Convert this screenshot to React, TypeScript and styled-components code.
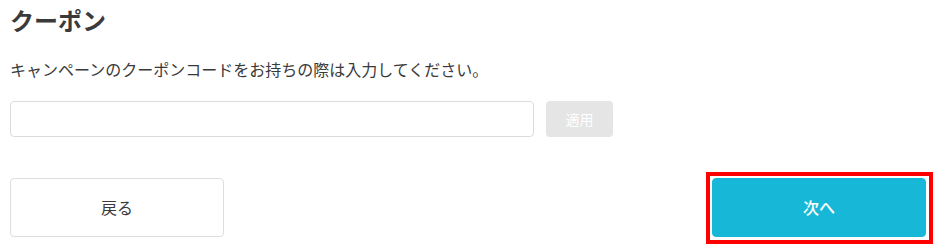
import React from 'react'
import styled, { createGlobalStyle, css } from 'styled-components'

const App: React.FC = () => {
    return (
        <>
            <GlobalStyle />
            <StContainer>
                <StTitle>クーポン</StTitle>
                <StLead>キャンペーンのクーポンコードをお持ちの際は入力してください。</StLead>
                <StCouponRow>
                    <StInput type="text" aria-label="クーポンコード" />
                    <StApplyButton type="button" disabled>
                        適用
                    </StApplyButton>
                </StCouponRow>
                <StFooter>
                    <StNavButton type="button">戻る</StNavButton>
                    <StNavButton type="button" $primary $focused>
                        次へ
                    </StNavButton>
                </StFooter>
            </StContainer>
        </>
    )
}

const GlobalStyle = createGlobalStyle`
    html, body {
        margin: 0;
        padding: 0;
        background: #ffffff;
    }
    body {
        font-family: "Noto Sans CJK JP", "Noto Sans", sans-serif;
        color: #3a3a3a;
    }
`

const StContainer = styled.div`
    padding: 0 11px 15px 10px;
`

const StTitle = styled.h2`
    margin: 0;
    font-size: 24px;
    font-weight: 700;
    line-height: 40px;
    color: #3a3a3a;
`

const StLead = styled.p`
    margin: 17px 0 0;
    font-size: 16px;
    line-height: 24px;
    color: #3a3a3a;
`

const StCouponRow = styled.div`
    display: flex;
    align-items: center;
    gap: 12px;
    margin-top: 20px;
`

const StInput = styled.input`
    box-sizing: border-box;
    width: 524px;
    height: 36px;
    padding: 0 10px;
    border: 1px solid #dcdcdc;
    border-radius: 4px;
    background: #fff;
    font-family: inherit;
    font-size: 15px;
    outline: none;
`

const StApplyButton = styled.button`
    box-sizing: border-box;
    width: 67px;
    height: 36px;
    border: none;
    border-radius: 4px;
    background: #e5e5e5;
    color: #ffffff;
    font-family: inherit;
    font-size: 14px;
    padding: 0;
`

const StFooter = styled.div`
    display: flex;
    justify-content: space-between;
    margin-top: 41px;
`

// focus ring in the capture is square, not following the radius
const focusRing = css`
    &::after {
        content: '';
        position: absolute;
        top: -7px;
        left: -7px;
        right: -8px;
        bottom: -8px;
        border: 4px solid #ff0000;
        pointer-events: none;
    }
`

const StNavButton = styled.button<{ $primary?: boolean; $focused?: boolean }>`
    position: relative;
    box-sizing: border-box;
    width: 214px;
    height: 59px;
    padding: 0 0 2px;
    border-radius: 4px;
    border: 1px solid ${({ $primary }) => ($primary ? '#17b8d7' : '#dedede')};
    background: ${({ $primary }) => ($primary ? '#17b8d7' : '#ffffff')};
    color: ${({ $primary }) => ($primary ? '#ffffff' : '#3a3a3a')};
    font-family: inherit;
    font-size: 16px;
    font-weight: ${({ $primary }) => ($primary ? 500 : 400)};
    outline: none;
    ${({ $focused }) => $focused && focusRing}
`

export default App
